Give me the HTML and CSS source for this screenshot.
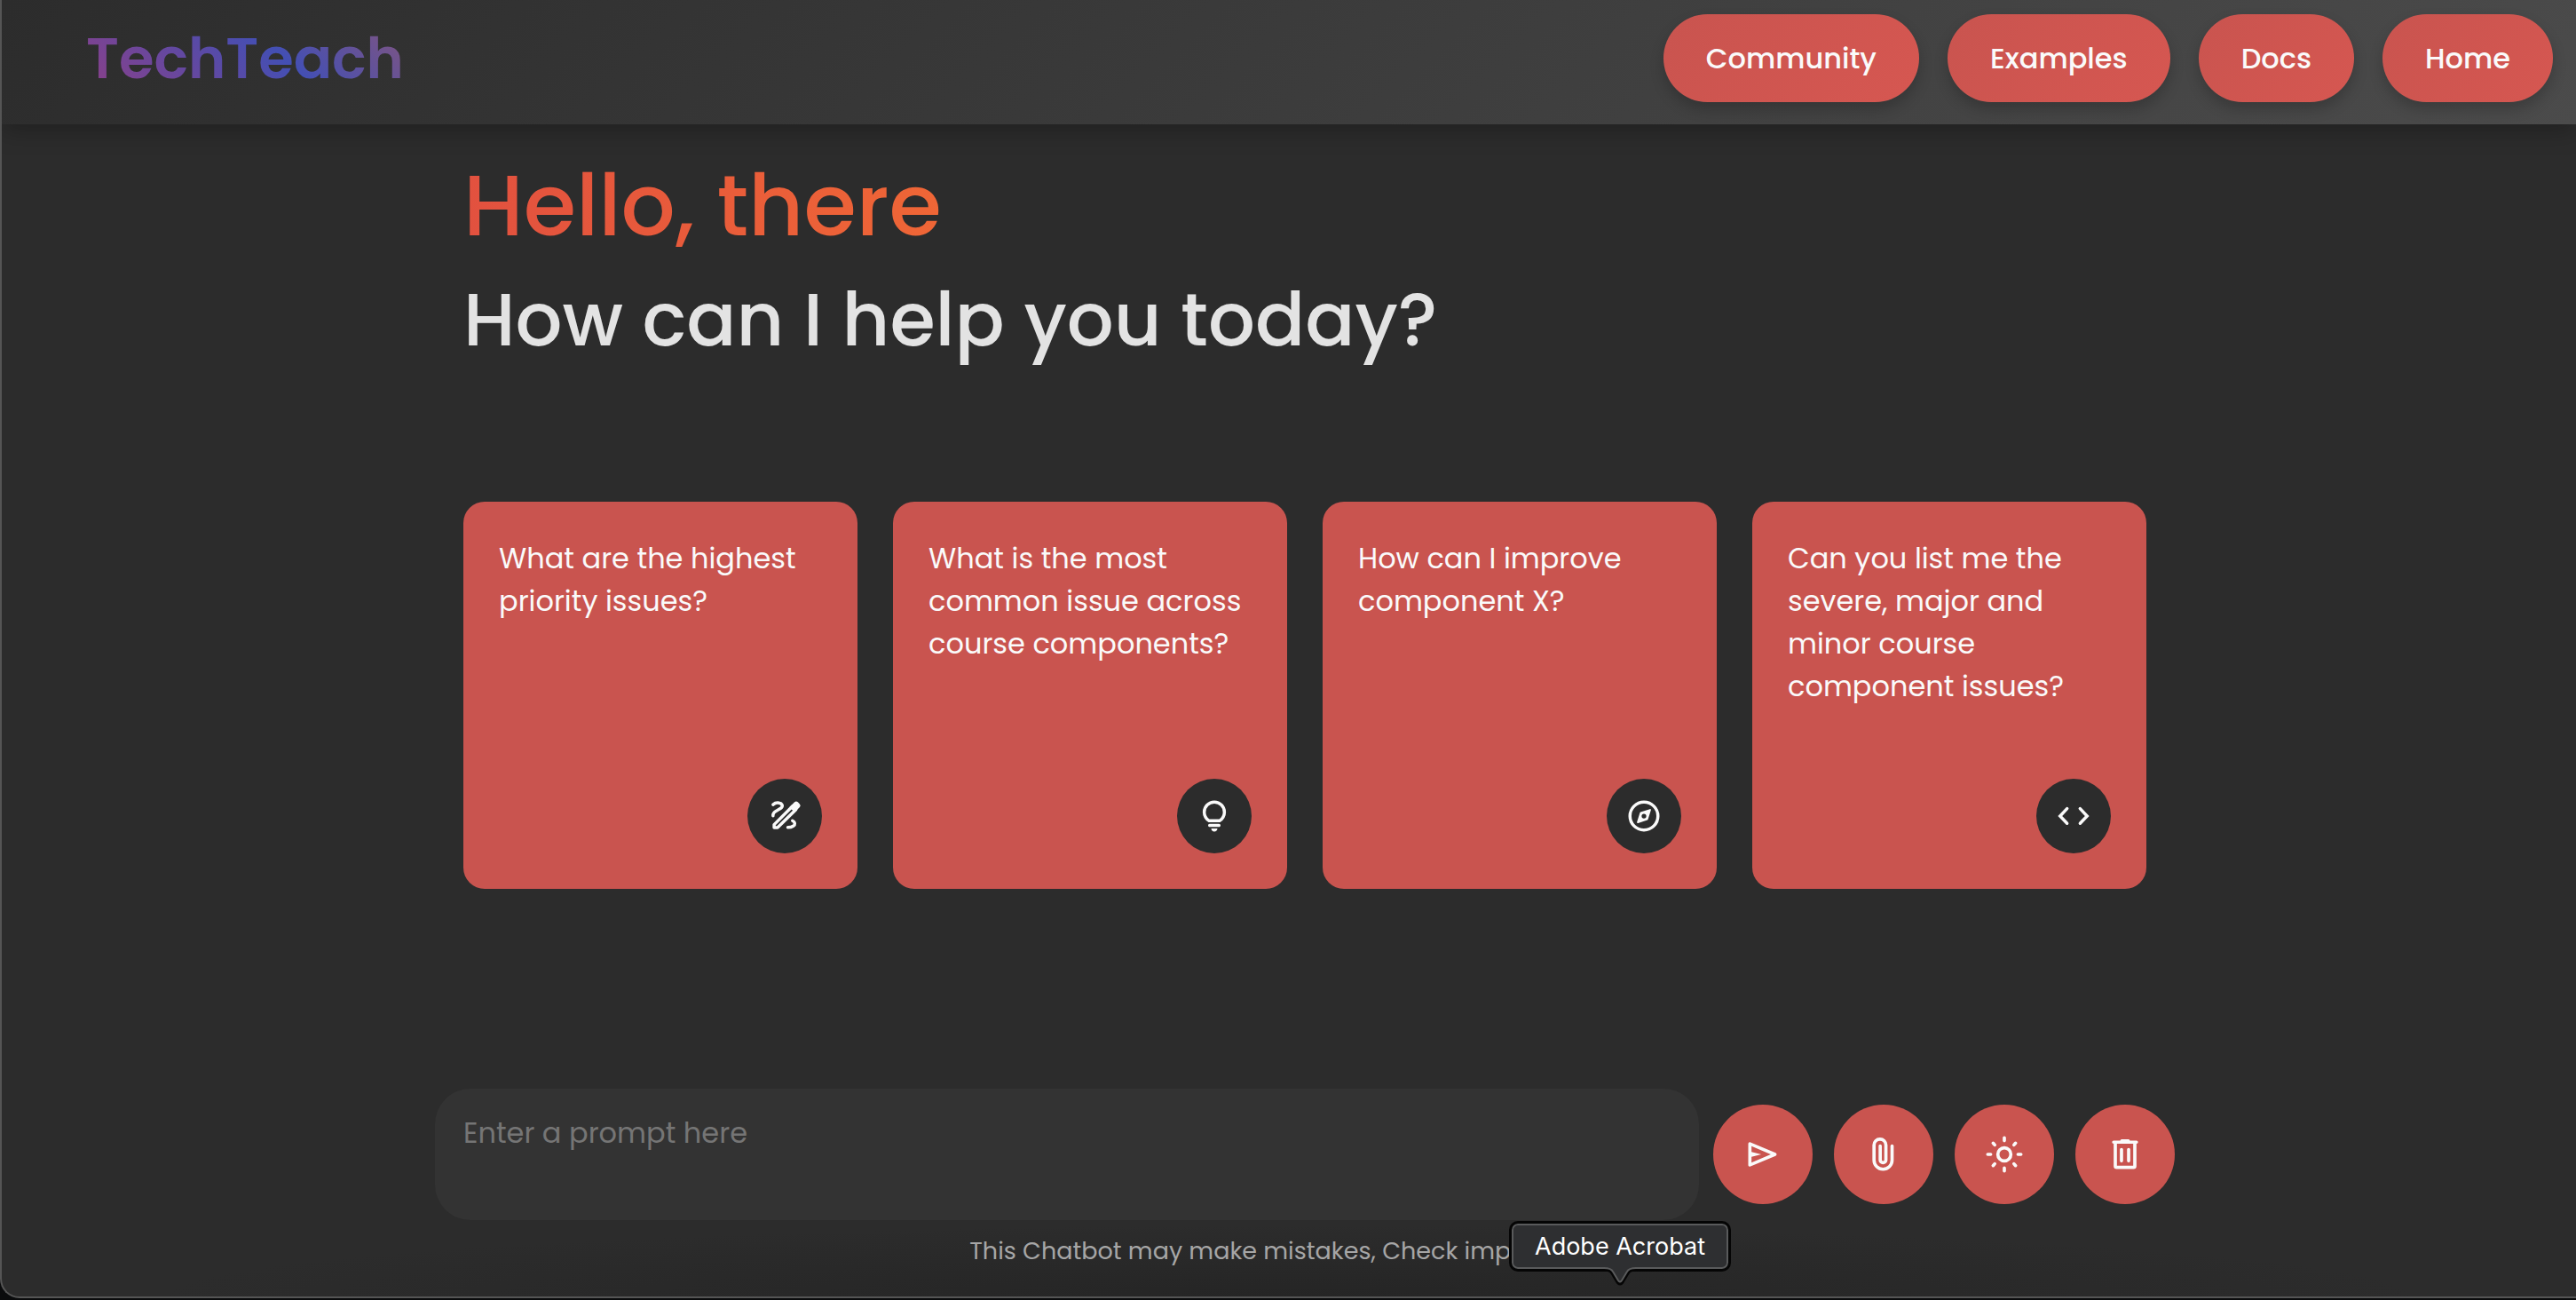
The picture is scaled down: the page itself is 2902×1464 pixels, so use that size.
FILE: index.html
```html
<!DOCTYPE html>
<html lang="en">
<head>
<meta charset="utf-8">
<meta name="viewport" content="width=device-width, initial-scale=1">
<title>TechTeach</title>
<link rel="stylesheet" href="styles.css">
</head>
<body>
<div class="window">
  <header class="topbar">
    <a class="logo" href="#">TechTeach</a>
    <nav class="nav">
      <a class="nav-link" href="#">Community</a>
      <a class="nav-link" href="#">Examples</a>
      <a class="nav-link" href="#">Docs</a>
      <a class="nav-link" href="#">Home</a>
    </nav>
  </header>

  <main class="content">
    <h1 class="title">Hello, there</h1>
    <p class="subtitle">How can I help you today?</p>
    <ul class="suggestions">
      <li class="card">
        <p class="card-text">What are the highest priority issues?</p>
        <span class="card-icon">
          <svg viewBox="0 0 24 24" fill="none" stroke="currentColor" stroke-width="2" stroke-linecap="round" stroke-linejoin="round" aria-hidden="true"><path d="M4.500 4.600C5.600 3.700 7 3.300 8.400 3.600c2 .3 2.700 2 1.300 3.200C8.400 7.900 5.800 8.600 4.900 10.100c-.4.600-.5 1.200-.4 1.800M5.200 19.400v-1.900L17 5.700l2.200 2.200L7.400 19.400ZM17 15c1.800.9 2 2.400.5 3.400-.9.600-2.200.9-3.500.9"/><path fill="currentColor" stroke-width="1" d="m15.700 6.300 3-2.900q.7-.6 1.400 0l1.200 1.200q.6.7 0 1.400l-2.900 2.900Z"/></svg>
        </span>
      </li>
      <li class="card">
        <p class="card-text">What is the most common issue across course components?</p>
        <span class="card-icon">
          <svg viewBox="0 -960 960 960" fill="currentColor" aria-hidden="true"><path d="M480-80q-33 0-56.500-23.500T400-160h160q0 33-23.500 56.500T480-80ZM360-200q-17 0-28.500-11.500T320-240q0-17 11.500-28.500T360-280h240q17 0 28.500 11.500T640-240q0 17-11.500 28.500T600-200H360ZM330-320q-69-41-109.500-110T180-580q0-125 87.500-212.500T480-880q125 0 212.500 87.500T780-580q0 81-40.500 150T630-320H330Zm24-80h252q45-32 69.500-79T700-580q0-92-64-156t-156-64q-92 0-156 64t-64 156q0 54 24.500 101t69.500 79Z"/></svg>
        </span>
      </li>
      <li class="card">
        <p class="card-text">How can I improve component X?</p>
        <span class="card-icon">
          <svg viewBox="0 0 24 24" aria-hidden="true"><circle cx="12" cy="12" r="9" fill="none" stroke="currentColor" stroke-width="2"/><path fill="currentColor" fill-rule="evenodd" d="m8.200 16.500 6-1.900q.3-.1.400-.4l1.900-6q.1-.8-.7-.7l-6 1.900q-.3.100-.4.400l-1.900 6q-.1.800.7.700ZM12 13.500a1.500 1.500 0 1 0 0-3 1.500 1.500 0 0 0 0 3Z"/></svg>
        </span>
      </li>
      <li class="card">
        <p class="card-text">Can you list me the severe, major and minor course component issues?</p>
        <span class="card-icon">
          <svg viewBox="0 0 24 24" fill="none" stroke="currentColor" stroke-width="2" stroke-linecap="round" aria-hidden="true"><path d="M7.800 7.200 3.300 12l4.500 4.700M16.200 7.200l4.500 4.800-4.500 4.700"/></svg>
        </span>
      </li>
    </ul>
  </main>

  <footer class="composer">
    <form class="prompt-row">
      <textarea class="prompt" aria-label="Prompt" placeholder="Enter a prompt here"></textarea>
      <div class="actions">
        <button class="action" type="button" aria-label="Send">
          <svg viewBox="0 -960 960 960" fill="currentColor" aria-hidden="true"><path d="M792-443 176-183q-20 8-38-3.500T120-220v-520q0-22 18-33.500t38-3.500l616 260q25 11 25 37t-25 37ZM200-280l474-200-474-200v140l240 60-240 60v140Z"/></svg>
        </button>
        <button class="action" type="button" aria-label="Attach file">
          <svg viewBox="0 0 24 24" fill="none" stroke="currentColor" stroke-width="2" stroke-linecap="round" aria-hidden="true"><path d="M17.200 6.800v8.800a5.550 5.550 0 0 1-11.100 0V6.300a3.650 3.650 0 0 1 7.300 0v9.100a1.750 1.750 0 0 1-3.500 0V6.800"/></svg>
        </button>
        <button class="action" type="button" aria-label="Toggle theme">
          <svg viewBox="0 0 24 24" fill="none" stroke="currentColor" stroke-width="2" stroke-linecap="round" aria-hidden="true"><circle cx="12" cy="12" r="4"/><path d="M12 1.800v1.800M12 20.400v1.800M1.800 12h1.800M20.400 12h1.800M5.100 5.100l1 1.100M18.900 5.100l-1 1.100M5.100 18.900l1-1.100M18.900 18.900l-1-1.100"/></svg>
        </button>
        <button class="action" type="button" aria-label="Delete chat">
          <svg viewBox="0 0 24 24" fill="none" stroke="currentColor" stroke-width="2" stroke-linecap="round" stroke-linejoin="round" aria-hidden="true"><path d="M5 4.500h14M10 3.700h4M6 5v14.200q0 .8.800.8h10.400q.8 0 .8-.8V5M9.800 9v7M14.200 9v7"/></svg>
        </button>
      </div>
    </form>
    <p class="disclaimer">This Chatbot may make mistakes, Check important info.</p>
  </footer>
</div>

<div class="dock-tip" role="tooltip">Adobe Acrobat
  <svg class="dock-tip-arrow" viewBox="0 0 36 22" aria-hidden="true"><path d="M0 0h36v2q-7 0-9 4l-6 11q-3 5-6 0L9 6Q7 2 0 2Z" fill="#2e2f31"/><path d="M0 3q7 0 9 4l6 10q3 4 6 0l6-10q2-4 9-4" fill="none" stroke="#050505" stroke-width="3"/><path d="M0 1q8 0 10 4l6 10q2 3 4 0l6-10q2-4 10-4" fill="none" stroke="#595a5b" stroke-width="2"/></svg>
</div>
</body>
</html>
```

FILE: styles.css
```css
:root {
  --bg: #2c2c2c;
  --surface: #333333;
  --accent: #c9544f;
  --accent-light: #d65751;
  --text: #fafafa;
  --frame: #555555;
}

* {
  box-sizing: border-box;
  margin: 0;
  padding: 0;
}

body {
  min-height: 100vh;
  padding-bottom: 2px;
  background: #0a0b0c;
  color: var(--text);
  font-family: "Poppins", "Inter", sans-serif;
  font-size: 32px;
}

.window {
  display: flex;
  flex-direction: column;
  min-height: calc(100vh - 2px);
  overflow: hidden;
  border-left: 2px solid var(--frame);
  border-bottom: 2px solid var(--frame);
  border-bottom-left-radius: 22px;
  background: radial-gradient(ellipse 44% 80px at 50% 100%, #252525, transparent) var(--bg);
}

.topbar {
  display: flex;
  align-items: center;
  justify-content: space-between;
  padding: 16px 26px 25px 95px;
  background: linear-gradient(135deg, #2c2c2c, #4b4b4b);
  box-shadow: 0 8px 24px rgba(0, 0, 0, 0.25);
}

.logo {
  background: linear-gradient(45deg, #8e3f86, #434fb4 60%, #85557c);
  background-clip: text;
  color: transparent;
  font-size: 64px;
  font-weight: 600;
  line-height: 96px;
  text-decoration: none;
}

.nav {
  display: flex;
  gap: 32px;
}

.nav-link {
  padding: 26px 48px;
  border-radius: 50px;
  background: linear-gradient(135deg, var(--accent), var(--accent-light));
  box-shadow: 0 8px 16px rgba(0, 0, 0, 0.2);
  color: var(--text);
  font-weight: 500;
  line-height: 47px;
  text-decoration: none;
}

.content,
.composer {
  width: 100%;
  max-width: 1996px;
  margin-inline: auto;
}

.content {
  padding: 28px 32px 40px 68px;
}

.title,
.subtitle {
  font-weight: 500;
  line-height: 128px;
}

.title {
  width: fit-content;
  background: linear-gradient(90deg, #e2513f, #ef6636);
  background-clip: text;
  color: transparent;
  font-size: 96px;
}

.subtitle {
  color: #e3e3e3;
  font-size: 83px;
}

.suggestions {
  display: grid;
  grid-template-columns: repeat(4, 1fr);
  gap: 40px;
  margin-top: 141px;
  list-style: none;
}

.card {
  display: flex;
  flex-direction: column;
  justify-content: space-between;
  min-height: 436px;
  padding: 40px;
  border-radius: 24px;
  background: var(--accent);
}

.card-text {
  line-height: 48px;
}

.card-icon {
  display: grid;
  place-items: center;
  align-self: flex-end;
  width: 84px;
  height: 84px;
  border-radius: 50%;
  background: var(--bg);
}

.card-icon svg {
  width: 42px;
  height: 42px;
}

.composer {
  margin-top: auto;
  padding: 0 0 31px 36px;
}

.prompt-row {
  display: flex;
  align-items: center;
  gap: 16px;
}

.prompt {
  flex: 1;
  height: 148px;
  padding: 26px 32px;
  border: 0;
  border-radius: 40px;
  outline: 0;
  background: var(--surface);
  color: var(--text);
  font: inherit;
  line-height: 48px;
  resize: none;
}

.prompt::placeholder {
  color: #757575;
}

.actions {
  display: flex;
  gap: 24px;
}

.action {
  display: grid;
  place-items: center;
  width: 112px;
  height: 112px;
  border: 0;
  border-radius: 50%;
  background: var(--accent);
  color: var(--text);
}

.action svg {
  width: 44px;
  height: 44px;
}

.disclaimer {
  margin-top: 15px;
  color: #a6a6a6;
  font-size: 27px;
  line-height: 40px;
  text-align: center;
}

.dock-tip {
  position: absolute;
  bottom: 32px;
  left: 1700px;
  padding: 6px 26px 5px;
  border: 3px solid #050505;
  border-radius: 10px;
  background: #2e2f31;
  box-shadow: inset 0 0 0 2px #595a5b;
  color: #ffffff;
  font-family: "Inter", sans-serif;
  font-size: 27px;
  line-height: 40px;
}

.dock-tip-arrow {
  position: absolute;
  top: calc(100% - 2px);
  left: calc(50% - 18px);
  width: 36px;
  height: 22px;
}
```
